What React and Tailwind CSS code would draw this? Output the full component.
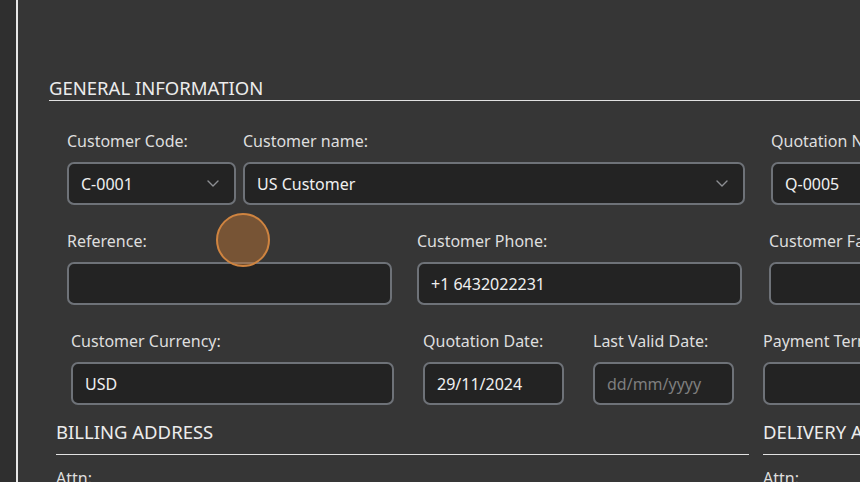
import React from "react";

const font = { fontFamily: '"Noto Sans", "Open Sans", sans-serif' };

function Chevron() {
  return (
    <svg width="12" height="7" viewBox="0 0 12 7" fill="none" className="shrink-0">
      <polyline points="1,1 6,6 11,1" stroke="#8d8f93" strokeWidth="1.4" strokeLinecap="round" strokeLinejoin="round" />
    </svg>
  );
}

function Field({ label, value, placeholder, select, width }) {
  return (
    <div className="flex flex-col shrink-0" style={{ width }}>
      <div className="text-[16px] leading-6 text-[#dedede] whitespace-nowrap mb-[9px]">{label}</div>
      <div className="h-[43px] rounded-[7px] border-2 border-[#6e7278] bg-[#232323] flex items-center pl-[12px] pr-[15px]">
        {value ? (
          <span className="flex-1 text-[16px] text-[#f0f0f0] whitespace-nowrap">{value}</span>
        ) : (
          <span className="flex-1 text-[16px] text-[#7e7e7e] whitespace-nowrap">{placeholder}</span>
        )}
        {select && <Chevron />}
      </div>
    </div>
  );
}

export default function App() {
  return (
    <div className="relative flex h-[482px] w-[860px] overflow-hidden bg-[#363636]" style={font}>
      <div className="w-[16px] shrink-0 bg-[#2f2f2f]" />
      <div className="w-[2px] shrink-0 bg-[#e8e8e8]" />

      <div className="flex-1 overflow-hidden pt-[75px] pl-[31px]">
        {/* General information */}
        <div className="w-[1200px] border-b border-[#e2e2e2] text-[18.5px] leading-[25px] text-[#ececec]">GENERAL INFORMATION</div>

        <div className="mt-[28px] ml-[18px] flex">
          <Field label="Customer Code:" value="C-0001" select width={169} />
          <div className="w-[7px] shrink-0" />
          <Field label="Customer name:" value="US Customer" select width={502} />
          <div className="w-[26px] shrink-0" />
          <Field label="Quotation No.:" value="Q-0005" width={220} />
        </div>

        <div className="mt-[24px] ml-[18px] flex">
          <Field label="Reference:" value="" width={325} />
          <div className="w-[25px] shrink-0" />
          <Field label="Customer Phone:" value="+1 6432022231" width={325} />
          <div className="w-[27px] shrink-0" />
          <Field label="Customer Fax:" value="" width={325} />
        </div>

        <div className="mt-[24px] ml-[22px] flex">
          <Field label="Customer Currency:" value="USD" width={323} />
          <div className="w-[29px] shrink-0" />
          <Field label="Quotation Date:" value="29/11/2024" width={141} />
          <div className="w-[29px] shrink-0" />
          <Field label="Last Valid Date:" placeholder="dd/mm/yyyy" width={141} />
          <div className="w-[29px] shrink-0" />
          <Field label="Payment Terms:" value="" width={325} />
        </div>

        {/* Addresses */}
        <div className="mt-[15px] ml-[7px] flex">
          <div className="w-[693px] shrink-0">
            <div className="border-b border-[#e2e2e2] pb-[10px] text-[18.5px] leading-6 text-[#ececec]">BILLING ADDRESS</div>
            <div className="mt-[11px] text-[16px] leading-6 text-[#dedede]">Attn:</div>
          </div>
          <div className="w-[14px] shrink-0" />
          <div className="w-[500px] shrink-0">
            <div className="border-b border-[#e2e2e2] pb-[10px] text-[18.5px] leading-6 text-[#ececec] whitespace-nowrap">DELIVERY ADDRESS</div>
            <div className="mt-[11px] text-[16px] leading-6 text-[#dedede]">Attn:</div>
          </div>
        </div>
      </div>

      {/* touch indicator */}
      <div className="absolute left-[216px] top-[213px] h-[54px] w-[54px] rounded-full border-2 border-[#cf8440] bg-[#c77a36]/45" />
    </div>
  );
}
